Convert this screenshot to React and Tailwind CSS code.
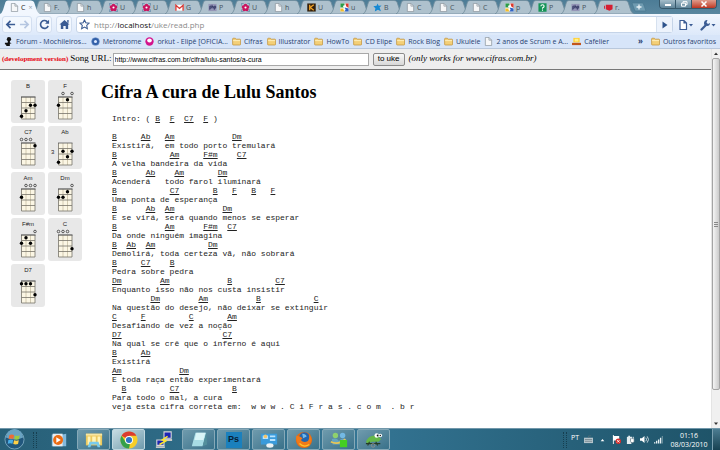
import React from "react";

const TABS = [
  ["file", "C"], ["file", "F."], ["file", "h"], ["flower", "U"], ["flower", "U"],
  ["gmail", "G"], ["php", "P"], ["flower", "U"], ["file", "h"], ["k", "U"],
  ["google", "u"], ["bird", "B"], ["file", "C"], ["file", "C"], ["file", "C"],
  ["google", "p"], ["question", "P"], ["php", "P"], ["red", "r."],
];

const BOOKMARKS = [
  ["person", "Fórum - Mochileiros..."],
  ["gear", "Metronome"],
  ["orkut", "orkut - Elipê [OFICIA..."],
  ["folder", "Cifras"],
  ["folder", "Illustrator"],
  ["folder", "HowTo"],
  ["folder", "CD Elipe"],
  ["folder", "Rock Blog"],
  ["folder", "Ukulele"],
  ["file", "2 anos de Scrum e A..."],
  ["coffee", "Cafelier"],
];

// One digit per string: 0 is open, otherwise the fret inside the diagram.
const CHORDS = [
  { name: "B", frets: [4, 3, 2, 2] },
  { name: "F", frets: [2, 0, 1, 0] },
  { name: "C7", frets: [0, 0, 0, 1] },
  { name: "Ab", frets: [4, 2, 3, 2], base: "3" },
  { name: "Am", frets: [2, 0, 0, 0] },
  { name: "Dm", frets: [2, 2, 1, 0] },
  { name: "F#m", frets: [2, 1, 2, 0] },
  { name: "C", frets: [0, 0, 0, 3] },
  { name: "D7", frets: [1, 1, 1, 3] },
];

// Chord names are wrapped in square brackets.
const SONG = [
  "Intro: ( [B]  [F]  [C7]  [F] )",
  "",
  "[B]     [Ab]   [Am]            [Dm]",
  "Existirá,  em todo porto tremulará",
  "[B]           [Am]     [F#m]    [C7]",
  "A velha bandeira da vida",
  "[B]      [Ab]    [Am]       [Dm]",
  "Acenderá   todo farol iluminará",
  "[B]           [C7]       [B]   [F]   [B]   [F]",
  "Uma ponta de esperança",
  "[B]      [Ab]  [Am]          [Dm]",
  "E se virá, será quando menos se esperar",
  "[B]          [Am]      [F#m]  [C7]",
  "Da onde ninguém imagina",
  "[B]  [Ab]  [Am]           [Dm]",
  "Demolirá, toda certeza vã, não sobrará",
  "[B]     [C7]    [B]",
  "Pedra sobre pedra",
  "[Dm]        [Am]            [B]         [C7]",
  "Enquanto isso não nos custa insistir",
  "        [Dm]        [Am]          [B]           [C]",
  "Na questão do desejo, não deixar se extinguir",
  "[C]     [F]         [C]       [Am]",
  "Desafiando de vez a noção",
  "[D7]                     [C7]",
  "Na qual se crê que o inferno é aqui",
  "[B]     [Ab]",
  "Existirá",
  "[Am]            [Dm]",
  "E toda raça então experimentará",
  "  [B]         [C7]           [B]",
  "Para todo o mal, a cura",
  "veja esta cifra correta em:  w w w . C i F r a s . c o m  . b r",
];

function SmallIcon({ kind }) {
  const shapes = {
    file: (
      <>
        <path d="M1.5.5h4l3 3v6h-7z" fill="#f6f7f8" stroke="#8b959d" strokeWidth=".8" />
        <path d="M5.5.5v3h3" fill="none" stroke="#8b959d" strokeWidth=".8" />
      </>
    ),
    folder: (
      <>
        <path d="M.7 2.2q0-.8.8-.8h2.2l1 1h4q.8 0 .8.8v5q0 .7-.8.7H1.5q-.8 0-.8-.7z" fill="#f3cf78" stroke="#c08f35" strokeWidth=".8" />
        <path d="M1.2 4h7.8" stroke="#fff1c0" strokeWidth="1" />
      </>
    ),
    flower: (
      <>
        <path d="M.4 3V.4H3M7 .4h2.600V3M9.600 7v2.600H7M3 9.600H.4V7" fill="none" stroke="#5b86a8" strokeWidth=".8" />
        <g fill="#c9155f"><circle cx="5" cy="2.700" r="2" /><circle cx="7.300" cy="4.500" r="2" /><circle cx="6.400" cy="7.100" r="2" /><circle cx="3.600" cy="7.100" r="2" /><circle cx="2.700" cy="4.500" r="2" /></g>
        <circle cx="5" cy="5" r="1.200" fill="#fff" />
      </>
    ),
    gmail: (
      <>
        <path d="M.5 2h9v6.500h-9z" fill="#fff" />
        <path d="M1 8.500V2.400L5 6l4-3.600v6.100" fill="none" stroke="#d93b36" strokeWidth="1.500" />
      </>
    ),
    php: (
      <>
        <path d="M.5 1h9v8h-9z" fill="#9596b8" />
        <path d="M2 7.500v-4h1.500v2.200H2M4.500 2v4M4.500 4H6v2M7 7.500v-4h1.500v2.200H7" fill="none" stroke="#292c5b" strokeWidth=".9" />
      </>
    ),
    k: (
      <>
        <path d="M.3.5h9.400v9H.3z" fill="#33210e" />
        <path d="M3 2v6M7.500 2 3.500 5l4 3" stroke="#f4a425" strokeWidth="1.400" fill="none" />
      </>
    ),
    google: (
      <>
        <path d="M.5.5h9v9h-9z" fill="#fff" />
        <path d="M.5.5H5v4.500H.5z" fill="#2d9b48" />
        <path d="M6 .5h3.500v5L7 4z" fill="#dc3a2f" />
        <path d="M5.500 5 9.500 6v3.500H5z" fill="#2f63c6" />
        <path d="M.5 6h3.500l1 3.500H.5z" fill="#f2bd2c" />
        <circle cx="4.800" cy="3.800" r="1.300" fill="#fff" /><circle cx="5" cy="7.300" r="1.200" fill="#fff" />
      </>
    ),
    bird: <path d="M5 .5 6.300 3l3.200-.3-2.200 2.400 1.500 4L5.500 7.500 2 9.500l.7-3.800L.4 3.500 4 3z" fill="#1689d3" />,
    question: (
      <>
        <path d="M.5.3h9v9.400h-9z" fill="#159457" />
        <path d="M3.200 3.500Q3.200 2 5 2t1.800 1.500Q6.800 4.500 5 5.500v1M5 7.300v1.200" fill="none" stroke="#fff" strokeWidth="1.200" />
      </>
    ),
    red: (
      <>
        <path d="M0 3h1v3.500H0z" fill="#d51e32" /><path d="M2 2h7.500v5L6 8.500 2 7z" fill="#d51e32" />
      </>
    ),
    person: (
      <>
        <circle cx="5.500" cy="2.500" r="2.400" fill="#111" />
        <path d="M4.500 4h2v2l2 1-2 .5V10h-4V8.500L1 8V6.500h3z" fill="#111" />
      </>
    ),
    gear: (
      <>
        <circle cx="5" cy="5" r="4.300" fill="#315fa8" stroke="#6d91c8" strokeWidth=".6" />
        <circle cx="5" cy="5" r="1.700" fill="#dce9ff" />
      </>
    ),
    orkut: (
      <>
        <circle cx="5" cy="5" r="4.600" fill="#d3138c" /><ellipse cx="5" cy="4" rx="2.600" ry="2.200" fill="#fff" />
      </>
    ),
    coffee: (
      <>
        <path d="M1.500 1h7v5h-7z" fill="#ffcf35" /><path d="M0 6.500h10v2.500H0z" fill="#c2561d" /><path d="M3 2h4v3H3z" fill="#fff08b" />
      </>
    ),
  };
  return <svg viewBox="0 0 10 10" className="size-[9px] shrink-0" aria-hidden="true">{shapes[kind]}</svg>;
}

function Tab({ icon, label, active }) {
  return (
    <button type="button" className={`relative flex h-[14px] w-[33px] shrink-0 items-center pl-[6px] text-[7px] leading-none text-[#46525c] ${active ? "z-10" : ""}`}>
      <svg viewBox="0 0 40 14" className="absolute -left-1 top-0 h-[14px] w-10" aria-hidden="true">
        <path d="M0 14Q2 13 3 10L5.500 2Q6 .5 8 .5H31Q33 .5 34 2L37 11Q38 13 40 14Z" fill={active ? "#f2f7fe" : "#aec1cd"} stroke={active ? "none" : "#6f8b9c"} strokeWidth=".8" />
      </svg>
      <span className="relative flex items-center gap-[2px]">
        <SmallIcon kind={icon} />
        <span className={active ? "text-[#222]" : ""}>{label}</span>
        {active && <span className="pl-px text-[#98a2ab]">×</span>}
      </span>
    </button>
  );
}

function TabStrip() {
  return (
    <div className="flex h-[14px] shrink-0 bg-gradient-to-b from-[#4c7c96] to-[#5a879f] pl-1">
      {TABS.map(([icon, label], i) => <Tab key={i} icon={icon} label={label} active={i === 0} />)}
      <button type="button" aria-label="Nova guia" className="relative flex h-[14px] w-4 items-center justify-center">
        <svg viewBox="0 0 16 14" className="h-[14px] w-4">
          <path d="M1 3h11l3 8H4z" fill="#6f9bb1" stroke="#47758d" strokeWidth=".6" />
          <path d="M8 4.500v5M5.500 7h5" stroke="#e8f2f7" strokeWidth="1.300" />
        </svg>
      </button>
      <div className="ml-auto mr-[3px] flex h-[9px] shrink-0 overflow-hidden rounded-b-sm border border-t-0 border-[#36586b]">
        <button type="button" aria-label="Minimizar" className="flex w-4 items-center justify-center border-r border-[#36586b] bg-gradient-to-b from-[#a4bdca] to-[#5f8499]">
          <svg viewBox="0 0 8 6" className="h-[6px] w-2"><path d="M1 3h6v2H1z" fill="#fff" /></svg>
        </button>
        <button type="button" aria-label="Restaurar" className="flex w-4 items-center justify-center border-r border-[#36586b] bg-gradient-to-b from-[#a4bdca] to-[#5f8499]">
          <svg viewBox="0 0 8 6" className="h-[6px] w-2"><path d="M3 2V.7h4v3H6M1.500 2.200h4v3h-4z" fill="none" stroke="#fff" /></svg>
        </button>
        <button type="button" aria-label="Fechar" className="flex w-6 items-center justify-center bg-gradient-to-b from-[#df9b8c] to-[#bd3421]">
          <svg viewBox="0 0 8 6" className="h-[6px] w-2"><path d="m1.500.5 5 5m0-5-5 5" stroke="#fff" strokeWidth="1.500" /></svg>
        </button>
      </div>
    </div>
  );
}

function NavButton({ label, children }) {
  return (
    <button type="button" aria-label={label} className="flex h-[15px] w-[14px] items-center justify-center">
      <svg viewBox="0 0 12 12" className="size-[11px]" fill="none" stroke="#3b5c94" strokeWidth="1.800">{children}</svg>
    </button>
  );
}

function NavGroup({ children }) {
  return <div className="flex rounded-[3px] border border-[#d3dff0] bg-[#f3f8fe]">{children}</div>;
}

function Toolbar() {
  return (
    <div className="flex h-[21px] shrink-0 items-center bg-gradient-to-b from-[#f2f7fe] to-[#dde9fa] px-[2px]">
      <div className="flex gap-1">
        <NavGroup>
          <NavButton label="Voltar"><path d="M11 6H2M6 2 2 6l4 4" /></NavButton>
          <NavButton label="Avançar"><path d="M1 6h9M6 2l4 4-4 4" stroke="#b5c6e1" /></NavButton>
        </NavGroup>
        <NavGroup>
          <NavButton label="Recarregar"><path d="M9.500 3.500A4.300 4.300 0 1 0 10 7.500" /><path d="M11 .8v4.400H6.600z" fill="#3b5c94" stroke="none" /></NavButton>
        </NavGroup>
        <NavGroup>
          <NavButton label="Página inicial"><path d="M.5 6 6 1l5.500 5H10v5H7.300V7.500H4.700V11H2V6z" fill="#3b5c94" stroke="none" /><path d="M9 1h1.500v3H9z" fill="#3b5c94" stroke="none" /></NavButton>
        </NavGroup>
      </div>
      <div className="ml-1 flex h-[17px] flex-1 items-center rounded-[3px] border border-[#c5d4e8] bg-white">
        <NavButton label="Favorito"><path d="m6 1 1.500 3.200 3.500.4-2.600 2.400.7 3.500L6 8.800l-3.100 1.700.7-3.500L1 4.600l3.500-.4z" strokeWidth="1.200" /></NavButton>
        <div role="textbox" aria-label="Endereço" tabIndex={0} className="ml-[3px] flex-1 whitespace-nowrap font-['Open_Sans',sans-serif] text-[8px] leading-[12px] text-[#8b8b8b]">
          http://<span className="text-[#111]">localhost</span>/uke/read.php
        </div>
        <button type="button" aria-label="Ir" className="flex h-[15px] w-4 items-center justify-center border-l border-[#d6e1ef] bg-[#edf3fc]">
          <svg viewBox="0 0 6 8" className="h-2 w-[6px]"><path d="M.5.5 5.500 4l-5 3.500z" fill="#2e538c" /></svg>
        </button>
      </div>
      <button type="button" aria-label="Página" className="ml-[5px] flex h-3 w-4 items-center">
        <svg viewBox="0 0 16 12" className="h-3 w-4"><path d="M2 1.500h4l2.500 2.500v6.500H2zM6 1.500V4h2.500" fill="#fff" stroke="#3b5c94" strokeWidth="1.200" /><path d="M11 5h4l-2 2.500z" fill="#3b5c94" /></svg>
      </button>
      <button type="button" aria-label="Ferramentas" className="ml-[6px] mr-[2px] flex h-3 w-4 items-center">
        <svg viewBox="0 0 16 12" className="h-3 w-4"><path d="m1.500 10.500 4-4" stroke="#3b5c94" strokeWidth="2.200" strokeLinecap="round" /><path d="M7.500 1A3 3 0 1 0 10 4L8 5 6.500 3.500z" fill="#3b5c94" /><path d="M11.500 5h4l-2 2.500z" fill="#3b5c94" /></svg>
      </button>
    </div>
  );
}

function Bookmark({ icon, label }) {
  return (
    <a href="#" className="flex items-center gap-[3px] whitespace-nowrap">
      <SmallIcon kind={icon} />{label}
    </a>
  );
}

function BookmarksBar() {
  return (
    <nav aria-label="Favoritos" className="flex h-[14px] shrink-0 items-center justify-between border-b border-[#b9c8dc] bg-[#d7e5f9] pb-px pl-1 pr-1 font-['Open_Sans',sans-serif] text-[7px] leading-none text-[#283f70]">
      <div className="flex items-center gap-1">
        {BOOKMARKS.map(([icon, label]) => <Bookmark key={label} icon={icon} label={label} />)}
      </div>
      <div className="flex items-center gap-2">
        <button type="button" aria-label="Mais favoritos" className="text-[8px] font-bold leading-none">»</button>
        <Bookmark icon="folder" label="Outros favoritos" />
      </div>
    </nav>
  );
}

function SongForm() {
  return (
    <form className="flex h-[21px] shrink-0 items-center border-b border-[#777] bg-[#eee] pl-[2px] font-['Liberation_Serif',serif] text-[9px] text-black" onSubmit={(e) => e.preventDefault()}>
      <span className="whitespace-nowrap text-[7px] font-bold text-red-600">(development version)</span>
      <label htmlFor="song" className="ml-[2px] whitespace-nowrap">Song URL:</label>
      <input id="song" type="text" defaultValue="http://www.cifras.com.br/cifra/lulu-santos/a-cura" className="ml-px h-[13px] w-64 border border-[#a8a8a8] bg-white px-px font-['Liberation_Sans',sans-serif] text-[7px]" />
      <button type="submit" className="ml-1 h-[13px] w-8 rounded-xs border border-[#8b8b8b] bg-gradient-to-b from-[#f8f8f8] to-[#d8d8d8] font-['Liberation_Sans',sans-serif] text-[8px] leading-none">to uke</button>
      <em className="ml-1 whitespace-nowrap">(only works for www.cifras.com.br)</em>
    </form>
  );
}

function ChordCard({ name, frets, base }) {
  const xs = [10.5, 15, 19.5, 24];
  return (
    <figure className="h-[43px] w-[34px] rounded-[3px] bg-[#e8e8e8] font-['Liberation_Sans',sans-serif] text-[#222]">
      <figcaption className="h-[11px] text-center text-[6px] leading-[12px]">{name}</figcaption>
      <svg viewBox="0 11 34 32" className="block h-8 w-[34px]" role="img" aria-label={name}>
        <path d="M10.500 17h13.500v22H10.500z" fill="#fbf6e4" />
        <path d="M15 17v22M19.500 17v22" stroke="#b9ae90" strokeWidth=".6" />
        <path d="M10.500 17v22M24 17v22" stroke="#77736a" strokeWidth=".8" />
        <path d="M10.500 22.500H24M10.500 28H24M10.500 33.500H24M10.500 39H24" stroke="#77736a" strokeWidth=".8" />
        <path d="M10 17h14.500" stroke="#555" strokeWidth={base ? 0.8 : 1.2} />
        {frets.map((f, i) => f === 0
          ? <circle key={i} cx={xs[i]} cy="13.500" r="1.300" fill="none" stroke="#222" strokeWidth=".7" />
          : <circle key={i} cx={xs[i]} cy={17 + f * 5.5 - 2.75} r="1.700" fill="#000" />)}
        {base && <text x="3" y="28" fontSize="6" fill="#222">{base}</text>}
      </svg>
    </figure>
  );
}

function SongLine({ text }) {
  return text.split(/(\[[^\]]+\])/).map((part, i) =>
    part.startsWith("[") ? <a key={i} href="#" className="underline">{part.slice(1, -1)}</a> : part
  );
}

function Page() {
  return (
    <div className="flex min-h-0 flex-1">
      <div className="flex min-w-0 flex-1 flex-col bg-white">
        <SongForm />
        <main className="flex min-h-0 flex-1 overflow-hidden pl-[11px]">
          <aside className="grid shrink-0 grid-cols-2 content-start gap-[3px] pt-[10px]">
            {CHORDS.map((c) => <ChordCard key={c.name} {...c} />)}
          </aside>
          <article className="min-w-0 flex-1 pl-[19px] pt-[10px] text-black">
            <h1 className="font-['Liberation_Serif',serif] text-[18px] font-bold leading-[24px]">Cifra A cura de Lulu Santos</h1>
            <pre className="pl-[11px] pt-[10px] font-['Liberation_Mono',monospace] text-[8px] leading-[9px] text-[#222]">
              {SONG.map((line, i) => <React.Fragment key={i}><SongLine text={line} />{"\n"}</React.Fragment>)}
            </pre>
          </article>
        </main>
      </div>
      <div className="flex w-[9px] shrink-0 flex-col items-center justify-between border-l border-[#e4e4e4] bg-[#f0f0f0]" aria-hidden="true">
        <svg viewBox="0 0 8 9" className="h-[9px] w-2"><path d="M2 6h4L4 3.500z" fill="#333" /></svg>
        <div className="w-2 flex-1">
          <div className="flex h-[92%] flex-col items-center justify-center gap-px rounded-xs border border-[#a4a4a4] bg-gradient-to-r from-[#f5f5f5] to-[#cbcbcb]">
            <span className="h-px w-1 bg-[#888]" />
            <span className="h-px w-1 bg-[#888]" />
            <span className="h-px w-1 bg-[#888]" />
          </div>
        </div>
        <svg viewBox="0 0 8 9" className="h-[9px] w-2"><path d="M2 3.500h4L4 6z" fill="#333" /></svg>
      </div>
    </div>
  );
}

function AppIcon({ kind }) {
  const shapes = {
    player: (<><path d="M2 4h12l4-1v14H2z" fill="#82b9dc" /><path d="M3 3h11v14H3z" fill="#e8edf1" /><circle cx="9" cy="10" r="5.500" fill="#eb6c14" /><path d="m7 7 5 3-5 3z" fill="#fff" /></>),
    explorer: (<><path d="M1 3h18v13H1z" fill="#ecc95e" /><path d="M1 3h18v2H1z" fill="#f7e6a4" /><path d="M3 6h3v9H3zM8 6h4v7H8zM14 6h3v9h-3z" fill="#fff4b7" /><path d="M5 12h10l2 6h-3l-1-3H7l-1 3H3z" fill="#79cbed" /></>),
    chrome: (<><circle cx="10" cy="10" r="9.500" fill="#f6ce28" /><path d="M10 10 1.800 5.200A9.500 9.500 0 0 1 18.200 5.200H10z" fill="#db3b30" /><path d="M10 19.500A9.500 9.500 0 0 1 1.800 5.200L6 12l5 3z" fill="#34a04a" /><circle cx="10" cy="10" r="4.400" fill="#fff" /><circle cx="10" cy="10" r="3.400" fill="#2f74c5" /></>),
    putty: (<><path d="M10 1h8v7h-8zM2 10h8v6H2z" fill="#1d26b4" stroke="#d8d8d8" strokeWidth="1.200" /><path d="M9 9h10v2H9zM1 17h10v2H1z" fill="#c8c8c8" /><path d="m14 6-6 4 4 1-7 4" fill="none" stroke="#ffe72b" strokeWidth="1.600" /></>),
    notepad: (<><path d="M6 2h12l-4 15H2z" fill="#a8dce5" /><path d="M7 2h10l-2 8H5z" fill="#d9f4f7" /><path d="m14 17 4-15 1 13z" fill="#538f9c" /></>),
    monitor: (<><path d="M1 3h18v12H1z" fill="#3a9bdb" /><path d="M3 5h6v4H3zM11 5h6v2h-6zM11 9h6v2h-6z" fill="#b9e3ff" /><circle cx="6" cy="6" r="2" fill="#f0c56b" /><ellipse cx="11" cy="16" rx="4" ry="2.500" fill="#edf3f5" /></>),
    firefox: (<><circle cx="10" cy="10" r="9" fill="#e46b13" /><circle cx="10.500" cy="7.500" r="6" fill="#2465ae" /><path d="M8 3q4 0 5 3L9 8z" fill="#75b9e9" /><path d="M1.500 5q2 1 4 1l3 2-2 2q3 4 8 1 2-3 1-8 6 8-1 13-7 4-11-1-3-4-2-10" fill="#f17a18" /><path d="M5 14q5 5 11 1" stroke="#ffc32d" strokeWidth="1.500" fill="none" /></>),
    messenger: (<><circle cx="6" cy="5" r="3" fill="#8fd16d" /><circle cx="14" cy="5" r="3" fill="#73b9e4" /><path d="M2 9q5-2 8 2 3-4 8-2l-1 6H3z" fill="#66a6c1" /><path d="M1 12q8 4 16-3" stroke="#e9c654" strokeWidth="2" fill="none" /><path d="M11 10h8v8h-8z" fill="#44cf22" /></>),
    lizard: (<><path d="M1 12q3-8 12-7l5 4-3 3H8l-5 2z" fill="#65b848" /><circle cx="13" cy="5" r="2.500" fill="#fff" /><circle cx="17" cy="5" r="2" fill="#fff" /><circle cx="14" cy="5" r="1" fill="#111" /><circle cx="17" cy="5" r=".8" fill="#111" /><path d="M1 14h16M5 12l-2 4M12 12l2 4" stroke="#263c25" strokeWidth="1.200" /><circle cx="9" cy="16" r="2" fill="none" stroke="#8e918b" /></>),
  };
  return <svg viewBox="0 0 20 20" className="size-[18px]" aria-hidden="true">{shapes[kind]}</svg>;
}

function TaskButton({ label, kind, plain, active, children }) {
  const look = plain
    ? "border-transparent"
    : active
      ? "border-[#bfd7df] bg-gradient-to-br from-[#c7dce2] to-[#6e9bad]"
      : "border-[#86a9b8] bg-gradient-to-br from-[#6f9bad] to-[#39718a]";
  return (
    <button type="button" aria-label={label} className={`flex h-[21px] w-[33px] shrink-0 items-center justify-center rounded-xs border ${look}`}>
      {children || <AppIcon kind={kind} />}
    </button>
  );
}

function TrayIcon({ children }) {
  return <svg viewBox="0 0 10 10" className="size-[9px]" aria-hidden="true">{children}</svg>;
}

function Taskbar() {
  return (
    <footer className="flex h-[22px] shrink-0 items-center border-t border-[#7197aa] bg-gradient-to-r from-[#286078] via-[#347594] to-[#1e5368] text-white">
      <button type="button" aria-label="Iniciar" className="ml-1 flex size-[21px] items-center justify-center">
        <svg viewBox="0 0 22 22" className="size-[21px]">
          <circle cx="11" cy="11" r="10" fill="#21577d" stroke="#8bb7cc" strokeWidth=".8" />
          <path d="M2 9a9 9 0 0 1 18 0q-9 4-18 0" fill="#6aa3c2" />
          <path d="M5.500 6.500q3-1.500 5 0l-.7 4q-2.500-1-5 0z" fill="#f06b33" /><path d="M11.500 6.800q2.500 1 5-.3l-.8 4.300q-2.500 1-5 0z" fill="#9ccc3f" />
          <path d="M4.600 11.500q2.500-1 5 0l-.7 4q-2.500-1-5 0z" fill="#49aee7" /><path d="M10.500 11.800q2.500 1 5 0l-.8 4q-2.500 1-5 0z" fill="#ffd046" />
        </svg>
      </button>
      <span className="ml-2 h-4 w-1 border-x border-dotted border-[#173f50]" />
      <div className="ml-[5px] flex gap-[2px]">
        <TaskButton label="Media Player" kind="player" plain />
        <TaskButton label="Explorer" kind="explorer" />
        <TaskButton label="Chrome" kind="chrome" active />
        <TaskButton label="PuTTY" kind="putty" plain />
        <TaskButton label="Bloco de notas" kind="notepad" />
        <TaskButton label="Photoshop">
          <span className="flex h-4 w-4 items-center justify-center bg-[#1b80bd] font-['Liberation_Sans',sans-serif] text-[9px] font-bold leading-none text-[#071e35]">Ps</span>
        </TaskButton>
        <TaskButton label="Painel" kind="monitor" />
        <TaskButton label="Firefox" kind="firefox" />
        <TaskButton label="Messenger" kind="messenger" />
        <TaskButton label="Gecko" kind="lizard" />
      </div>
      <div className="ml-auto flex h-full items-center font-['Open_Sans',sans-serif] text-[7px] leading-none">
        <span className="h-4 w-1 border-x border-dotted border-[#163f50]" />
        <span className="ml-1 pb-1">PT</span>
        <div className="ml-[5px] mr-[3px] flex items-center gap-[5px]">
          <TrayIcon><path d="M0 3h10v6H0z" fill="#b5c5cc" /><path d="M1 5h8M1 7h8M5 3V1h3" stroke="#5c7078" strokeWidth=".7" fill="none" /></TrayIcon>
          <TrayIcon><path d="M3 7h4L5 4.500z" fill="#fff" /></TrayIcon>
          <TrayIcon><path d="M1 0h1v10H1zM2 1h6v5H2z" fill="#fff" /><circle cx="7" cy="7" r="3" fill="#d82d2b" /><path d="m5.700 5.700 2.600 2.600m0-2.600L5.700 8.300" stroke="#fff" /></TrayIcon>
          <TrayIcon><path d="M1 2h5v8H1z" fill="#e5edf0" /><path d="M2.500.8h2V3h-2z" fill="#e5edf0" /><path d="M5 4h4v3q0 1.500-2 1.500T5 7z" fill="#fff" stroke="#516d79" strokeWidth=".7" /><path d="M6 2v2m2-2v2" stroke="#fff" /></TrayIcon>
          <TrayIcon><path d="M0 3.500h2L5 1v8L2 6.500H0z" fill="#fff" /><path d="M6.500 3q1.500 2 0 4M8 1.500q3 3.500 0 7" stroke="#fff" fill="none" strokeWidth=".8" /></TrayIcon>
          <TrayIcon><path d="M0 8h1.500v1.500H0zM2.200 6.500h1.500v3H2.200zM4.400 5h1.500v4.500H4.400zM6.600 3h1.500v6.500H6.600z" fill="#e8f1f4" /><path d="M8.700 1h1v8.500h-1z" fill="#82a0ab" /></TrayIcon>
        </div>
        <div className="w-[46px] text-center leading-[9px]">
          <div>01:16</div>
          <div>08/03/2010</div>
        </div>
        <button type="button" aria-label="Mostrar área de trabalho" className="h-full w-2 border-l border-[#7ca1b1] bg-gradient-to-b from-[#4c7d92] to-[#174252]" />
      </div>
    </footer>
  );
}

export default function App() {
  return (
    <div className="flex h-screen flex-col overflow-hidden bg-white font-['Open_Sans',sans-serif]">
      <TabStrip />
      <Toolbar />
      <BookmarksBar />
      <Page />
      <Taskbar />
    </div>
  );
}
